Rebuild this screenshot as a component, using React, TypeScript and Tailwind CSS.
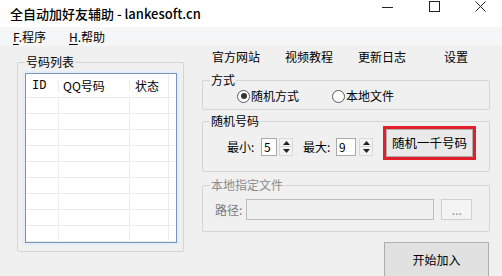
import { ReactNode } from "react";

const rows = Array.from({ length: 9 });

const GroupBox = ({
  label,
  disabled,
  className,
  children,
}: {
  label: string;
  disabled?: boolean;
  className?: string;
  children?: ReactNode;
}) => (
  <div className={`relative rounded-[2px] border border-[#d5d5d5] ${className ?? ""}`}>
    <span
      className={`absolute -top-[9px] left-[7px] bg-[#f0f0f0] px-[1px] leading-[16px] ${
        disabled ? "text-[#8d8d8d]" : "text-black"
      }`}
    >
      {label}
    </span>
    {children}
  </div>
);

const Radio = ({ checked, label }: { checked?: boolean; label: string }) => (
  <div className="flex items-center">
    <span className="flex h-[13px] w-[13px] items-center justify-center rounded-full border border-[#5a5a5a] bg-white">
      {checked && <span className="h-[6px] w-[6px] rounded-full bg-[#333]"></span>}
    </span>
    <span className="ml-[1px] leading-[16px]">{label}</span>
  </div>
);

const Spinner = () => (
  <div className="ml-[2px] flex h-[18px] w-[14px] flex-col">
    <div className="flex h-[9px] items-center justify-center border border-[#d9d9d9] bg-[#f3f3f3]">
      <svg width="7" height="4" viewBox="0 0 7 4">
        <path d="M0 4 L3.5 0 L7 4 Z" fill="#222" />
      </svg>
    </div>
    <div className="flex h-[9px] items-center justify-center border border-t-0 border-[#d9d9d9] bg-[#f3f3f3]">
      <svg width="7" height="4" viewBox="0 0 7 4">
        <path d="M0 0 L3.5 4 L7 0 Z" fill="#222" />
      </svg>
    </div>
  </div>
);

const NumberBox = ({ value, width }: { value: string; width: string }) => (
  <div className={`flex h-[18px] items-center border border-[#a9a9a9] bg-white pl-[2px] leading-none ${width}`}>
    {value}
  </div>
);

export default function App() {
  return (
    <div className="h-[276px] w-[502px] overflow-hidden bg-[#f0f0f0] font-['Noto_Sans_CJK_SC',sans-serif] text-[12px] text-black">
      {/* title bar */}
      <div className="flex h-[27px] items-center justify-between bg-white">
        <span className="pl-[10px] text-[13px] font-medium leading-none">
          全自动加好友辅助 - lankesoft.cn
        </span>
        <div className="mr-[16px] flex items-start gap-[38px] self-start pt-[1px]">
          <svg width="11" height="11" viewBox="0 0 11 11">
            <path d="M0 6.5 H11" stroke="#222" strokeWidth="1" />
          </svg>
          <svg width="11" height="11" viewBox="0 0 11 11" className="-ml-[2px]">
            <rect x="0.5" y="0.5" width="10" height="10" fill="none" stroke="#222" strokeWidth="1" />
          </svg>
          <svg width="11" height="11" viewBox="0 0 11 11" className="-ml-[3px]">
            <path d="M0.5 0.5 L10.5 10.5 M10.5 0.5 L0.5 10.5" stroke="#222" strokeWidth="1" />
          </svg>
        </div>
      </div>

      {/* menu bar */}
      <div className="flex h-[19px] items-center bg-[#f5f6f7] leading-none">
        <span className="pl-[13px]">
          <span className="underline underline-offset-2">F</span>.程序
        </span>
        <span className="pl-[23px]">
          <span className="underline underline-offset-2">H</span>.帮助
        </span>
      </div>

      <div className="flex">
        {/* number list */}
        <GroupBox label="号码列表" className="ml-[17px] mt-[16px] h-[190px] w-[167px] pl-[7px] pt-[10px]">
          <div className="h-[170px] w-[152px] overflow-hidden border border-[#7a93b8] bg-white shadow-[0_0_0_2px_#e3eefa]">
            <div className="flex h-[24px] items-center border-b border-[#ececec] leading-none">
              <span className="w-[32px] pl-[6px] font-['Liberation_Mono',monospace]">ID</span>
              <span className="w-[71px] border-l border-[#ececec] pl-[4px]">QQ号码</span>
              <span className="w-[39px] border-l border-[#ececec] pl-[5px]">状态</span>
              <span className="h-full border-l border-[#ececec]"></span>
            </div>
            {rows.map((_, i) => (
              <div key={i} className="flex h-[16px] border-b border-[#ececec]">
                <span className="w-[32px]"></span>
                <span className="w-[71px] border-l border-[#ececec]"></span>
                <span className="w-[39px] border-l border-[#ececec]"></span>
                <span className="border-l border-[#ececec]"></span>
              </div>
            ))}
          </div>
        </GroupBox>

        {/* right panel */}
        <div className="ml-[18px] flex w-[288px] flex-col">
          <div className="flex h-[22px] items-center pl-[10px] leading-none">
            <span>官方网站</span>
            <span className="ml-[25px]">视频教程</span>
            <span className="ml-[25px]">更新日志</span>
            <span className="ml-[38px]">设置</span>
          </div>

          <GroupBox label="方式" className="mt-[12px] flex h-[30px] items-center pl-[34px] pt-[2px]">
            <Radio checked label="随机方式" />
            <div className="ml-[33px]">
              <Radio label="本地文件" />
            </div>
          </GroupBox>

          <GroupBox label="随机号码" className="mt-[11px] flex h-[51px] items-start pl-[24px]">
            <div className="mt-[16px] flex items-center">
              <span className="w-[31px] leading-none">最小:</span>
              <div className="ml-[3px]">
                <NumberBox value="5" width="w-[16px]" />
              </div>
              <Spinner />
              <span className="ml-[10px] w-[32px] leading-none">最大:</span>
              <div className="ml-[1px]">
                <NumberBox value="9" width="w-[20px]" />
              </div>
              <div className="ml-[1px]">
                <Spinner />
              </div>
            </div>
            <div className="ml-[10px] mt-[4px] border-[3px] border-[#e41e2b]">
              <div className="flex h-[28px] w-[87px] items-center justify-center border border-[#adadad] bg-[#e9e9e9] text-[12.5px] leading-none">
                随机一千号码
              </div>
            </div>
          </GroupBox>

          <GroupBox label="本地指定文件" disabled className="mt-[13px] flex h-[47px] items-center pl-[12px] pt-[2px]">
            <span className="leading-none text-[#7a7a7a]">路径:</span>
            <div className="ml-[4px] h-[21px] w-[188px] border border-[#bcbcbc] bg-[#f0f0f0]"></div>
            <div className="ml-[7px] flex h-[21px] w-[31px] items-center justify-center border border-[#cfcfcf] bg-[#f4f4f4] leading-none text-[#8d8d8d]">
              ...
            </div>
          </GroupBox>

          <div className="ml-[182px] mt-[10px] flex h-[36px] w-[105px] items-center justify-center border border-[#adadad] bg-[#e1e1e1] leading-none">
            开始加入
          </div>
        </div>
      </div>
    </div>
  );
}
